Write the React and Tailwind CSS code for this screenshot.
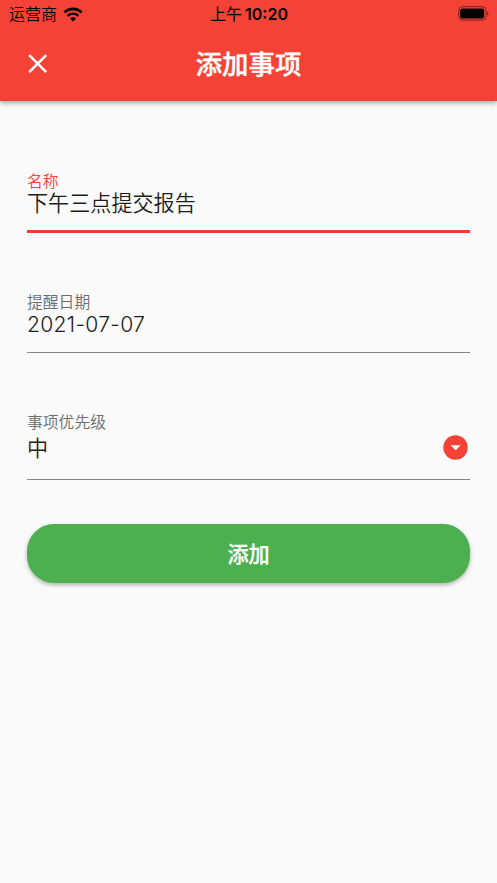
import { useState } from 'react';

const fontStack = "font-[Inter,'Noto_Sans_CJK_SC',sans-serif]";

function StatusBar() {
    return (
        <div className="flex h-7 items-center justify-between pl-[9px] pr-[8px] text-[16px] leading-none text-black">
            <div className="flex w-[120px] items-center gap-[6px]">
                <span className="font-[350]">运营商</span>
                <svg width="20" height="15" viewBox="0 0 20 15" fill="none" stroke="currentColor">
                    <path d="M1.3 5.4C6.3.7 13.7.7 18.7 5.4" strokeWidth="2.6" />
                    <path d="M4.6 8.9C7.8 6 12.2 6 15.4 8.9" strokeWidth="2.3" />
                    <path d="M10 14.4 7 11.4Q10 9.2 13 11.4Z" fill="currentColor" stroke="none" />
                </svg>
            </div>
            <div className="flex items-center gap-[3px]">
                <span className="font-normal">上午</span>
                <span className="font-semibold">10:20</span>
            </div>
            <div className="flex w-[120px] justify-end">
                <svg width="31" height="15" viewBox="0 0 31 15" className="-mt-[1px]">
                    <rect x=".7" y=".7" width="27.4" height="13.4" rx="4" fill="none" stroke="#000" strokeOpacity=".5" />
                    <rect x="2.2" y="2.4" width="24" height="10" rx="2.2" />
                    <path d="M29.2 5.4c1.8.6 1.8 3.4 0 4z" fillOpacity=".5" />
                </svg>
            </div>
        </div>
    );
}

export default function App() {
    const [name, setName] = useState('下午三点提交报告');

    return (
        <div className={`h-[883px] w-[497px] overflow-hidden bg-[#fafafa] ${fontStack}`}>
            <header className="h-[101px] bg-[#f44336] shadow-[0_2px_5px_rgba(0,0,0,0.35)]">
                <StatusBar />
                <div className="grid h-[73px] grid-cols-[75px_1fr_75px] items-center">
                    <button aria-label="关闭" className="flex justify-center pb-[1px] text-white">
                        <svg width="20" height="20" viewBox="0 0 20 20" stroke="currentColor" strokeWidth="2.6">
                            <path d="M1.2 1.2l17 17M18.2 1.2l-17 17" />
                        </svg>
                    </button>
                    <h1 className="pt-[1px] text-center text-[26.4px] font-medium text-white [-webkit-text-stroke:0.4px_white]">添加事项</h1>
                </div>
            </header>

            <main className="px-[27px] pt-[72px]">
                <label className="block h-[60px] border-b-[3px] border-[#f13a30]">
                    <span className="block h-[18px] text-[15.8px] leading-[18px] font-[350] text-[#f44336]">名称</span>
                    <input
                        value={name}
                        onChange={(e) => setName(e.target.value)}
                        className="block h-[25px] w-full text-[21.1px] leading-[25px] font-[350] text-[#1c1c1c] outline-none"
                    />
                </label>

                <div className="mt-[61px] h-[59px] border-b border-[#858585]">
                    <p className="h-[18px] text-[15.8px] leading-[18px] font-[350] text-[#6c6c6c]">提醒日期</p>
                    <p className="text-[21.1px] leading-[26px] font-[350] tracking-[0.3px] text-[#1c1c1c]">2021-07-07</p>
                </div>

                <div className="mt-[61px] h-[66px] border-b border-[#858585]">
                    <p className="h-[18px] text-[15.8px] leading-[18px] font-[350] text-[#6c6c6c]">事项优先级</p>
                    <div className="flex h-[31px] items-center justify-between pr-[2px]">
                        <span className="pt-[2px] text-[21.1px] font-[350] text-[#1c1c1c]">中</span>
                        <svg width="25" height="25" viewBox="0 0 25 25">
                            <circle cx="12.5" cy="12.5" r="12.2" fill="#f44336" />
                            <path d="M7.6 10.2h10l-5 5z" fill="#fff" />
                        </svg>
                    </div>
                </div>

                <button className="mt-[44px] h-[59px] w-full rounded-[27px] bg-[#4caf50] pt-[2px] text-[21.1px] font-medium text-white shadow-[0_2px_4px_rgba(0,0,0,0.3)] [-webkit-text-stroke:0.3px_white]">
                    添加
                </button>
            </main>
        </div>
    );
}
